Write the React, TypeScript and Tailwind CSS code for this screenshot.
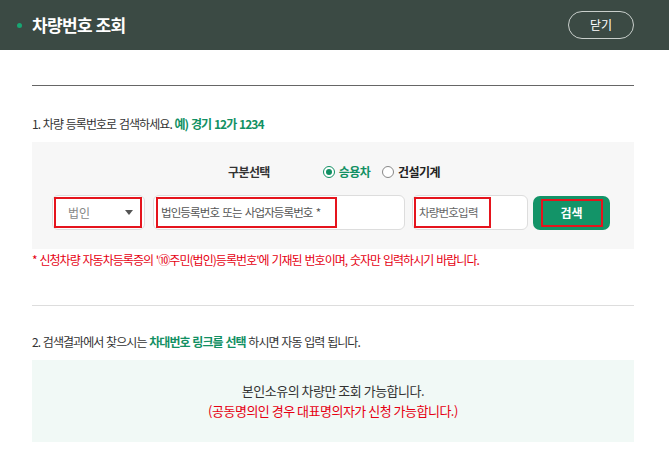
const font = { fontFamily: '"Noto Sans CJK KR", "Noto Sans", sans-serif' };

export default function App() {
  return (
    <div className="w-[669px] min-h-[451px] bg-white text-[#333] text-[13px]" style={font}>
      {/* Header */}
      <header className="h-[50px] bg-[#3b4a44] flex items-center justify-between pl-[17px] pr-[35px]">
        <div className="flex items-center">
          <span className="w-[5px] h-[5px] rounded-full bg-[#17a673] mr-[10px]" />
          <h1 className="text-[17px] font-bold text-white tracking-[-0.6px]">차량번호 조회</h1>
        </div>
        <button className="w-[66px] h-[28px] rounded-full border border-[#c9cfcc] text-white text-[12px]">
          닫기
        </button>
      </header>

      <main className="px-[32px] pt-[35px] pb-[8px] w-[666px]">
        <div className="border-t border-[#666]" />

        <p className="mt-[29px] text-[12px] tracking-[-0.95px] [word-spacing:1px]">
          1. 차량 등록번호로 검색하세요.{" "}
          <span className="text-[#119063] font-bold">예) 경기 12가 1234</span>
        </p>

        {/* Search box */}
        <section className="mt-[9px] h-[107px] bg-[#f7f7f7] pt-[21px] pl-[20px]">
          <div className="flex items-center text-[12px] tracking-[-0.6px] font-bold h-[18px]">
            <span className="ml-[176px] text-[#333]">구분선택</span>
            <label className="ml-[53px] flex items-center text-[#119063]">
              <span className="w-[12px] h-[12px] rounded-full border border-[#119063] flex items-center justify-center mr-[4px] bg-white">
                <span className="w-[6px] h-[6px] rounded-full bg-[#119063]" />
              </span>
              승용차
            </label>
            <label className="ml-[12px] flex items-center text-[#222]">
              <span className="w-[12px] h-[12px] rounded-full border border-[#888] bg-white mr-[4px]" />
              건설기계
            </label>
          </div>

          <div className="mt-[14px] flex items-center h-[35px]">
            {/* select */}
            <div className="w-[93px] h-[35px] rounded-[6px] border border-[#ddd] bg-white flex items-center">
              <div className="ml-[1px] w-[88px] h-[31px] border-2 border-[#e5141d] flex items-center justify-between pl-[12px] pr-[7px]">
                <span className="text-[#888] text-[12px]">법인</span>
                <svg width="8" height="5" viewBox="0 0 8 5">
                  <path d="M0 0h8L4 5z" fill="#555" />
                </svg>
              </div>
            </div>
            {/* input 1 */}
            <div className="ml-[8px] w-[252px] h-[35px] rounded-[6px] border border-[#ddd] bg-white flex items-center">
              <div className="ml-[2px] w-[181px] h-[31px] border-2 border-[#e5141d] flex items-center pl-[3px]">
                <span className="text-[#555] text-[11.5px] tracking-[-0.9px] [word-spacing:1.5px] whitespace-nowrap">법인등록번호 또는 사업자등록번호 *</span>
              </div>
            </div>
            {/* input 2 */}
            <div className="ml-[7px] w-[116px] h-[35px] rounded-[6px] border border-[#ddd] bg-white flex items-center">
              <div className="ml-[1px] w-[77px] h-[31px] border-2 border-[#e5141d] flex items-center pl-[3px]">
                <span className="text-[#666] text-[11.5px] tracking-[-0.8px] whitespace-nowrap">차량번호입력</span>
              </div>
            </div>
            {/* button */}
            <button className="ml-[5px] w-[77px] h-[34px] rounded-[7px] bg-[#139468] flex items-center justify-center">
              <span className="w-[62px] h-[28px] border-2 border-[#e5141d] flex items-center justify-center text-white font-bold text-[12px]">
                검색
              </span>
            </button>
          </div>
        </section>

        <p className="mt-[2px] text-[#e60012] text-[12px] tracking-[-0.95px] [word-spacing:1px]">
          * 신청차량 자동차등록증의 '⑩주민(법인)등록번호'에 기재된 번호이며, 숫자만 입력하시기 바랍니다.
        </p>

        <div className="mt-[36px] border-t border-[#ddd]" />

        <p className="mt-[27px] text-[12px] tracking-[-0.95px] [word-spacing:1px]">
          2. 검색결과에서 찾으시는{" "}
          <span className="text-[#119063] font-bold">차대번호 링크를 선택</span> 하시면 자동 입력 됩니다.
        </p>

        <section className="mt-[9px] h-[82px] bg-[#f1f9f6] flex flex-col items-center justify-center text-[13px] leading-[20px] tracking-[-0.5px]">
          <p className="text-[#333]">본인소유의 차량만 조회 가능합니다.</p>
          <p className="text-[#e60012]">(공동명의인 경우 대표명의자가 신청 가능합니다.)</p>
        </section>
      </main>
    </div>
  );
}
